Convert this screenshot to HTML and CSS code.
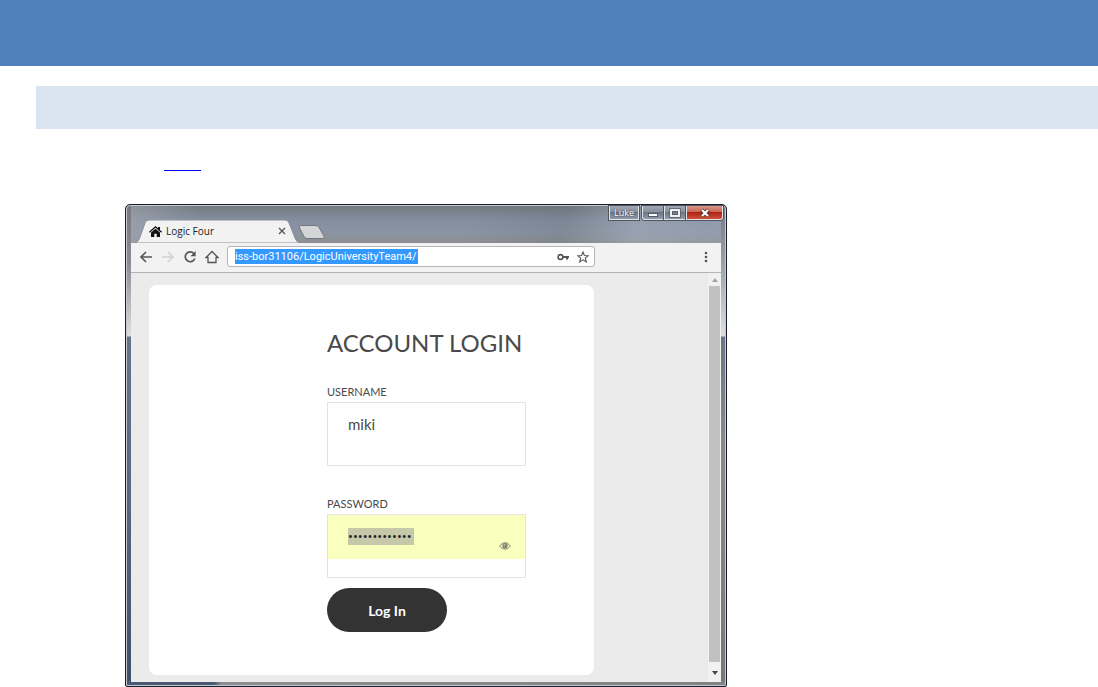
FILE: index.html
```html
<!DOCTYPE html>
<html lang="en">
<head>
  <meta charset="UTF-8">
  <meta name="viewport" content="width=device-width, initial-scale=1.0">
  <title>Logic Four</title>
  <link rel="stylesheet" href="styles.css">
</head>
<body>
  <header class="banner"></header>
  <div class="section-bar"></div>

  <main class="doc">
    <p class="link-line"><a class="doc-link" href="#" aria-label="Link"></a></p>

    <div class="window">
      <div class="title-bar">
        <div class="tab">
          <svg class="tab-shape" viewBox="0 0 165 23" preserveAspectRatio="none">
            <path d="M0 23 C3 22 4 20 5 17 L10 3 Q11 0 14 0 H150 Q153 0 154 3 L160 18 Q161 22 165 23 Z" fill="#f2f2f2" stroke="#8b9099" stroke-width="1"/>
          </svg>
          <svg class="home-solid" viewBox="0 0 13 11">
            <path d="M6.500 0 L9 2.200 V1 H11 V4 L13 5.800 L12.200 6.700 L6.500 1.700 L.8 6.700 L0 5.800 Z M6.500 2.700 L11 6.600 V11 H7.700 V7.700 H5.300 V11 H2 V6.600 Z" fill="#111"/>
          </svg>
          <span class="tab-title">Logic Four</span>
          <button class="tab-close" aria-label="Close tab">
            <svg viewBox="0 0 8 8"><path d="M1 1 L7 7 M7 1 L1 7" stroke="#555" stroke-width="1.300"/></svg>
          </button>
        </div>
        <button class="new-tab" aria-label="New tab">
          <svg viewBox="0 0 28 14"><path d="M3 .5 H18 Q20 .5 21 2.500 L26 11 Q27 13.500 24.500 13.500 H9 Q7 13.500 6 11.500 L1.500 3 Q.5 .5 3 .5 Z" fill="#d3d4d6" stroke="#74777d"/></svg>
        </button>
        <div class="window-buttons">
          <button class="win-btn user">Luke</button>
          <button class="win-btn minimize" aria-label="Minimize">
            <svg viewBox="0 0 12 10"><rect x="1.500" y="5.500" width="9" height="3" fill="#fff" stroke="#555b66"/></svg>
          </button>
          <button class="win-btn maximize" aria-label="Maximize">
            <svg viewBox="0 0 12 10"><rect x="2" y="2" width="8" height="6" fill="none" stroke="#555b66" stroke-width="3.500"/><rect x="2" y="2" width="8" height="6" fill="none" stroke="#fff" stroke-width="1.800"/></svg>
          </button>
          <button class="win-btn close" aria-label="Close">
            <svg viewBox="0 0 12 10"><path d="M2.500 2 L9.500 8 M9.500 2 L2.500 8" stroke="#5c3430" stroke-width="4"/><path d="M3 2 L9 8 M9 2 L3 8" stroke="#fff" stroke-width="2.200"/></svg>
          </button>
        </div>
      </div>

      <div class="toolbar">
        <button class="tool" aria-label="Back">
          <svg viewBox="0 0 14 14"><path d="M13 7 H2 M7 2 L2 7 L7 12" fill="none" stroke="#555" stroke-width="1.600"/></svg>
        </button>
        <button class="tool" aria-label="Forward">
          <svg viewBox="0 0 14 14"><path d="M1 7 H12 M7 2 L12 7 L7 12" fill="none" stroke="#d0d0d0" stroke-width="1.500"/></svg>
        </button>
        <button class="tool" aria-label="Reload">
          <svg viewBox="0 0 14 14"><path d="M10.800 3.500 A4.900 4.900 0 1 0 11.800 8.500" fill="none" stroke="#555" stroke-width="1.700"/><path d="M12.600 1 V6.200 H7.400 Z" fill="#555"/></svg>
        </button>
        <button class="tool" aria-label="Home">
          <svg viewBox="0 0 14 14"><path d="M1 7.500 L7 1.500 L13 7.500 H11 V12.500 H3 V7.500 Z" fill="none" stroke="#555" stroke-width="1.300"/></svg>
        </button>
        <div class="address">
          <input class="url" type="text" aria-label="Address" value="iss-bor31106/LogicUniversityTeam4/">
          <svg class="key" viewBox="0 0 12 8"><circle cx="3.500" cy="4" r="2.400" fill="none" stroke="#555" stroke-width="1.600"/><path d="M6 3 H12 V5 H11 V6.500 H9 V5 H6 Z" fill="#555"/></svg>
          <svg class="star" viewBox="0 0 12 12"><path d="M6 1 L7.400 4.500 L11.200 4.700 L8.300 7.100 L9.300 10.900 L6 8.800 L2.700 10.900 L3.700 7.100 L.8 4.700 L4.600 4.500 Z" fill="none" stroke="#555" stroke-width="1.100"/></svg>
        </div>
        <button class="menu" aria-label="Menu">
          <svg viewBox="0 0 4 12"><circle cx="2" cy="2" r="1.300" fill="#555"/><circle cx="2" cy="6" r="1.300" fill="#555"/><circle cx="2" cy="10" r="1.300" fill="#555"/></svg>
        </button>
      </div>

      <div class="viewport">
        <div class="page">
          <form class="card">
            <h1>ACCOUNT LOGIN</h1>
            <label for="username">USERNAME</label>
            <div class="field">
              <input class="username" id="username" type="text" value="miki">
            </div>
            <label for="password">PASSWORD</label>
            <div class="field">
              <div class="autofill">
                <input class="password" id="password" type="password" value="logicfourteam">
                <svg class="eye" viewBox="0 0 12 8"><path d="M.5 4 Q6 -2.800 11.500 4 Q6 10.500 .5 4 Z" fill="none" stroke="#8c8f7c"/><circle cx="6" cy="3.700" r="2.800" fill="#85887a"/><circle cx="5.300" cy="2.800" r=".6" fill="#f9ffbd"/></svg>
              </div>
            </div>
            <button class="login" type="button">Log In</button>
          </form>
        </div>
        <div class="scrollbar">
          <svg viewBox="0 0 8 5"><path d="M4 0 L7 4 H1 Z" fill="#a3a3a3"/></svg>
          <div class="thumb"></div>
          <svg viewBox="0 0 8 5"><path d="M1 0 H7 L4 4 Z" fill="#444"/></svg>
        </div>
      </div>
    </div>
  </main>
</body>
</html>
```

FILE: styles.css
```css
* {
  box-sizing: border-box;
}

body {
  margin: 0;
  background: #fff;
  font-family: "Open Sans", sans-serif;
  color: #4a4a4a;
}

button,
input {
  font: inherit;
  color: inherit;
  padding: 0;
  border: 0;
  background: none;
}

svg {
  display: block;
}

.banner {
  height: 66px;
  background: #4f81bc;
}

.section-bar {
  height: 43px;
  margin: 20px 0 0 36px;
  background: #dbe5f1;
}

.doc {
  padding: 24px 24px 0 125px;
}

.link-line {
  margin: 0 0 33px 39px;
}

.doc-link {
  display: block;
  width: 37px;
  height: 18px;
  border-bottom: 1px solid #00f;
}

/* Browser window */
.window {
  max-width: 602px;
  padding: 0 5px 4px;
  border: 1px solid #17202c;
  border-radius: 5px 5px 2px 2px;
  box-shadow: inset 0 0 0 1px #c5cad3;
  background:
    linear-gradient(90deg, #4a5a72 0 88px, #8e8e90 96px, #828282) bottom / 100% 5px no-repeat,
    linear-gradient(#77777f, #8e8c94 60px, #dedee2 131px, #66748c 132px, #58677f 300px, #3f4f67) left / 6px 100% no-repeat,
    linear-gradient(#77777f, #a5a9b2 70px, #dedee2 131px, #6b7486 132px, #8a8a8c 240px, #777) right / 6px 100% no-repeat,
    #8c929b;
}

.title-bar {
  display: flex;
  align-items: flex-end;
  height: 37px;
  margin-top: 1px;
  padding-left: 4px;
  background:
    linear-gradient(100deg, #a9adb480, #8a909a00 70px, #5a606800 330px, #5a606833 430px, #a4adba88 500px, #a4adba55),
    linear-gradient(#757a80, #8490a2 15px, #8b94a2 28px, #8d8f92);
}

.tab {
  position: relative;
  display: flex;
  align-items: center;
  width: 165px;
  height: 23px;
  padding: 0 14px 1px;
}

.tab-shape {
  position: absolute;
  inset: 0;
  width: 100%;
  height: 100%;
}

.home-solid {
  position: relative;
  width: 13px;
  height: 11px;
}

.tab-title {
  position: relative;
  flex: 1;
  margin-left: 4px;
  font-size: 10px;
  line-height: 14px;
  color: #222;
}

.tab-close {
  position: relative;
  width: 8px;
  height: 8px;
}

.new-tab {
  width: 28px;
  height: 14px;
  margin: 0 0 4px -2px;
}

.window-buttons {
  display: flex;
  align-self: flex-start;
  margin: 0 -2px 0 auto;
}

.win-btn {
  display: flex;
  align-items: center;
  justify-content: center;
  width: 22px;
  height: 14px;
  border: 1px solid #e0e3e8;
  border-top: 0;
  background: linear-gradient(#a2a8b2, #858e9c 50%, #6c7686 50%, #929bab);
  box-shadow: 0 0 0 1px #50555e;
}

.win-btn svg {
  width: 12px;
  height: 10px;
}

.win-btn.user {
  width: 30px;
  margin-right: 3px;
  font-size: 9px;
  line-height: 12px;
  color: #fff;
  text-shadow: 0 0 2px #222;
}

.win-btn.minimize {
  border-bottom-left-radius: 3px;
}

.win-btn.close {
  width: 37px;
  border-bottom-right-radius: 3px;
  background: linear-gradient(#d99588, #c8604f 50%, #ae2315 50%, #cd5139);
}

.toolbar {
  display: flex;
  align-items: center;
  height: 30px;
  padding: 0 13px 2px 8px;
  border-bottom: 1px solid #b3b3b3;
  background: #f2f2f2;
}

.tool {
  flex: none;
  width: 14px;
  height: 14px;
  margin-right: 8px;
}

.address {
  display: flex;
  align-items: center;
  flex: 0 1 368px;
  height: 21px;
  padding: 0 5px 0 7px;
  border: 1px solid #b5b5b5;
  border-radius: 3px;
  background: #fff;
}

.url {
  width: 183px;
  height: 15px;
  font-family: Roboto, sans-serif;
  font-size: 11px;
  line-height: 15px;
  color: #fff;
  background: #3399ff;
}

.key {
  width: 12px;
  height: 8px;
  margin: 0 8px 0 auto;
}

.star {
  width: 12px;
  height: 12px;
}

.menu {
  width: 4px;
  height: 12px;
  margin-left: auto;
}

.viewport {
  display: flex;
  background: #ebebeb;
}

.page {
  flex: 1;
  padding: 12px 0 7px 18px;
}

/* Login form */
.card {
  max-width: 445px;
  padding: 42px 68px 43px 178px;
  border-radius: 8px;
  background: #fff;
  font-family: Lato, sans-serif;
}

.card h1 {
  margin: 0 0 26px;
  font-size: 24px;
  font-weight: 400;
  line-height: 32px;
  white-space: nowrap;
}

.card label {
  display: block;
  margin-bottom: 3px;
  font-size: 11px;
  line-height: 14px;
}

.field {
  height: 64px;
  margin-bottom: 31px;
  border: 1px solid #e3e3e3;
}

.username {
  width: 100%;
  height: 44px;
  padding: 0 20px 2px;
  font-size: 15px;
}

.autofill {
  display: flex;
  justify-content: space-between;
  height: 44px;
  padding: 13px 14px 0 20px;
  background: #f9ffbd;
}

.password {
  width: 66px;
  height: 17px;
  font-family: "Open Sans", sans-serif;
  font-size: 13px;
  line-height: 17px;
  color: #222;
  background: #c5c8a9;
}

.eye {
  width: 12px;
  height: 8px;
  margin-top: 14px;
}

.login {
  display: block;
  width: 120px;
  height: 44px;
  margin-top: -21px;
  border-radius: 22px;
  font-size: 14px;
  font-weight: 700;
  color: #fff;
  background: #333;
}

.scrollbar {
  display: flex;
  flex-direction: column;
  align-items: center;
  width: 13px;
  padding: 5px 0 6px;
  background: #f1f1f1;
}

.scrollbar svg {
  width: 8px;
  height: 5px;
}

.thumb {
  flex: 1;
  width: 11px;
  margin: 3px 0 9px;
  background: #c1c1c1;
}
```
